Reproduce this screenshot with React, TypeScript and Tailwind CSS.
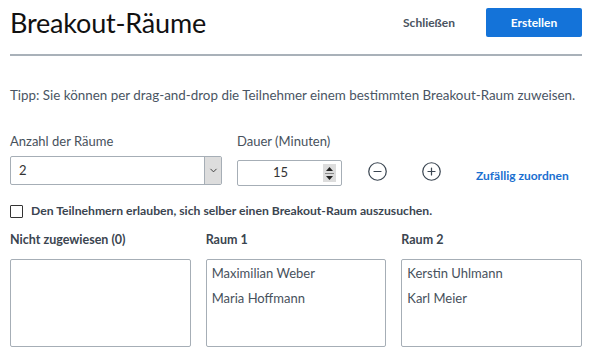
import { CircleMinus, CirclePlus, ChevronDown } from "lucide-react";

const font = { fontFamily: "Lato, 'Liberation Sans', sans-serif" };

const Room = ({ label, names }: { label: string; names: string[] }) => (
  <div className="flex flex-col">
    <div className="h-[20px] leading-[20px] text-[12.5px] font-bold text-[#3b4550]">{label}</div>
    <div className="mt-[9px] h-[88px] rounded-[2px] border border-[#a6aeb6] px-[5px] pt-[1px]">
      {names.map((n) => (
        <div key={n} className="leading-[25px] text-[13px] text-[#47515c]">
          {n}
        </div>
      ))}
    </div>
  </div>
);

const App = () => {
  return (
    <div className="w-[592px] h-[358px] bg-white px-[10px]" style={font}>
      <header className="flex items-center justify-between pt-[8px] pb-[17px] border-b-2 border-[#a9b1b9]">
        <h1 className="text-[27px] leading-[29px] text-[#111] tracking-[-0.2px]">Breakout-Räume</h1>
        <div className="flex items-center">
          <button className="text-[12px] font-bold text-[#4a5360] mr-[31px]">Schließen</button>
          <button className="h-[29px] w-[96px] rounded-[2px] bg-[#1473d9] text-[12px] font-bold text-white">
            Erstellen
          </button>
        </div>
      </header>

      <p className="mt-[29px] whitespace-nowrap leading-[20px] text-[13.4px] text-[#4a5563]">
        Tipp: Sie können per drag-and-drop die Teilnehmer einem bestimmten Breakout-Raum zuweisen.
      </p>

      <div className="mt-[26px] flex items-start">
        <div className="flex flex-col">
          <label className="leading-[20px] text-[13px] text-[#47515c]">Anzahl der Räume</label>
          <div className="mt-[5px] flex h-[29px] w-[212px] rounded-[2px] border border-[#a6aeb6]">
            <span className="flex-1 pl-[8px] leading-[27px] text-[13px] text-[#333]">2</span>
            <span className="flex w-[17px] items-center justify-center border-l border-[#a6aeb6] bg-[#dddddd]">
              <ChevronDown className="h-[11px] w-[11px] text-[#333]" strokeWidth={2} />
            </span>
          </div>
        </div>

        <div className="ml-[15px] flex flex-col">
          <label className="leading-[20px] text-[13px] text-[#47515c]">Dauer (Minuten)</label>
          <div className="mt-[9px] flex h-[26px] w-[105px] items-center rounded-[2px] border border-[#a6aeb6] pr-[5px]">
            <span className="flex-1 text-center text-[13px] text-[#333]">15</span>
            <span className="flex h-[18px] w-[13px] flex-col items-center justify-center gap-[2px] bg-[#dcdcdc]">
              <svg width="7" height="4" viewBox="0 0 7 4"><path d="M0 4 L3.5 0 L7 4 Z" fill="#222" /></svg>
              <span className="h-px w-[9px] bg-[#888]" />
              <svg width="7" height="4" viewBox="0 0 7 4"><path d="M0 0 L3.5 4 L7 0 Z" fill="#222" /></svg>
            </span>
          </div>
        </div>

        <div className="ml-[25px] mt-[30px] flex items-center gap-[33px] text-[#3b4652]">
          <CircleMinus className="h-[21px] w-[21px]" strokeWidth={1.4} />
          <CirclePlus className="h-[21px] w-[21px]" strokeWidth={1.4} />
        </div>

        <button className="ml-[34px] mt-[36px] text-[12px] font-bold text-[#1a6fd0]">Zufällig zuordnen</button>
      </div>

      <label className="mt-[15px] flex items-center gap-[8px] leading-[20px]">
        <span className="h-[13px] w-[13px] border border-[#333] rounded-[1px]" />
        <span className="text-[12.2px] font-bold text-[#3b4550]">
          Den Teilnehmern erlauben, sich selber einen Breakout-Raum auszusuchen.
        </span>
      </label>

      <div className="mt-[9px] grid grid-cols-3 gap-x-[15px]">
        <Room label="Nicht zugewiesen (0)" names={[]} />
        <Room label="Raum 1" names={["Maximilian Weber", "Maria Hoffmann"]} />
        <Room label="Raum 2" names={["Kerstin Uhlmann", "Karl Meier"]} />
      </div>
    </div>
  );
};

export default App;
